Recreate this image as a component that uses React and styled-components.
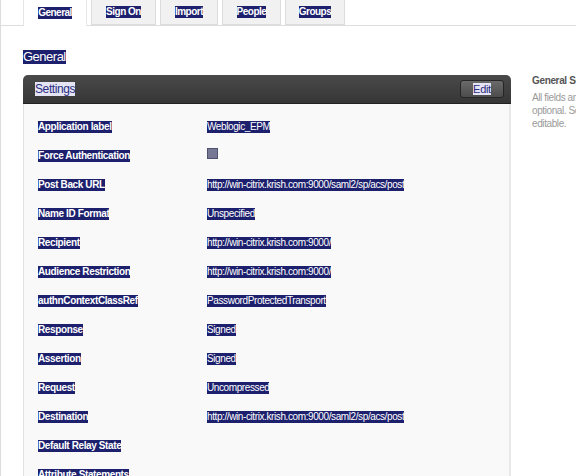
import React from "react";
import styled, { createGlobalStyle } from "styled-components";

const Global = createGlobalStyle`
  html, body { margin: 0; padding: 0; overflow: hidden; background: #fff; }
  body { font-family: "Liberation Sans", Arial, sans-serif; }
`;

const Page = styled.div`
  width: 576px;
  height: 476px;
  overflow: hidden;
  border-left: 1px solid #dcdcdc;
  box-sizing: border-box;
  background: #fff;
`;

const TabBar = styled.div`
  display: flex;
  align-items: flex-end;
  height: 26px;
  padding-left: 22px;
  border-bottom: 1px solid #dedede;
  box-sizing: border-box;
  gap: 4px;
`;

const Tab = styled.div`
  width: ${(p) => p.$w}px;
  height: ${(p) => (p.$active ? 26 : 25)}px;
  box-sizing: border-box;
  display: flex;
  align-items: center;
  justify-content: center;
  padding-bottom: 1px;
  background: ${(p) => (p.$active ? "#fff" : "#f1f1f1")};
  border: 1px solid ${(p) => (p.$active ? "#e6e6e6" : "#dcdcdc")};
  border-top: none;
  border-bottom: ${(p) => (p.$active ? "none" : "1px solid #dcdcdc")};
  margin-bottom: ${(p) => (p.$active ? -1 : 0)}px;
`;

const Sel = styled.span`
  display: inline-block;
  background: #1d206c;
  color: #fff;
  line-height: ${(p) => p.$lh || 12}px;
  font-size: ${(p) => p.$size || 10}px;
  font-weight: ${(p) => (p.$bold ? "bold" : "normal")};
  letter-spacing: ${(p) => p.$ls ?? -0.38}px;
`;

const InvSel = styled.span`
  display: inline-block;
  background: #e4e4f4;
  color: #2b2d80;
  line-height: ${(p) => p.$lh || 14}px;
  font-size: ${(p) => p.$size || 12}px;
  letter-spacing: ${(p) => p.$ls ?? -0.4}px;
`;

const Content = styled.div`
  display: flex;
  gap: 21px;
  padding-left: 22px;
`;

const Main = styled.div`
  width: 488px;
  flex-shrink: 0;
`;

const Heading = styled.h2`
  margin: 23px 0 11px;
  font-size: 13px;
  font-weight: normal;
  line-height: 15px;
  height: 15px;
`;

const Panel = styled.div`
  display: flex;
  flex-direction: column;
`;

const PanelHeader = styled.div`
  height: 29px;
  box-sizing: border-box;
  display: flex;
  align-items: center;
  justify-content: space-between;
  padding: 0 7px 0 12px;
  background: linear-gradient(#4a4a4a, #363636);
  border-radius: 5px 5px 0 0;
  border-bottom: 1px solid #222;
`;

const EditButton = styled.button`
  width: 44px;
  height: 18px;
  padding: 0;
  display: flex;
  align-items: center;
  justify-content: center;
  background: linear-gradient(#6a6a6a, #4c4c4c);
  border: 1px solid #262626;
  border-radius: 3px;
  font-family: "Liberation Sans", Arial, sans-serif;
`;

const PanelBody = styled.div`
  background: #f9f9f9;
  border-left: 1px solid #e2e2e2;
  border-right: 2px solid #e8e8e8;
  padding: 6px 0 0 14px;
  display: grid;
  grid-template-columns: 169px 1fr;
  grid-auto-rows: 29px;
  align-items: center;
`;

const Checkbox = styled.span`
  display: inline-block;
  width: 9px;
  height: 9px;
  background: #767896;
  border: 1px solid #4f5170;
  margin-top: -4px;
`;

const Side = styled.div`
  width: 220px;
  flex-shrink: 0;
  padding-top: 48px;
`;

const SideTitle = styled.div`
  font-size: 10px;
  font-weight: bold;
  color: #555;
  line-height: 13px;
  letter-spacing: -0.35px;
  margin-bottom: 4px;
  white-space: nowrap;
`;

const SideText = styled.div`
  font-size: 10px;
  color: #9a9a9a;
  line-height: 13px;
  letter-spacing: -0.4px;
  white-space: nowrap;
`;

const tabs = [
  ["General", 64, true],
  ["Sign On", 65],
  ["Import", 58],
  ["People", 59],
  ["Groups", 60],
];

const rows = [
  ["Application label", "Weblogic_EPM"],
  ["Force Authentication", null, true],
  ["Post Back URL", "http://win-citrix.krish.com:9000/saml2/sp/acs/post"],
  ["Name ID Format", "Unspecified"],
  ["Recipient", "http://win-citrix.krish.com:9000/"],
  ["Audience Restriction", "http://win-citrix.krish.com:9000/"],
  ["authnContextClassRef", "PasswordProtectedTransport"],
  ["Response", "Signed"],
  ["Assertion", "Signed"],
  ["Request", "Uncompressed"],
  ["Destination", "http://win-citrix.krish.com:9000/saml2/sp/acs/post"],
  ["Default Relay State", ""],
  ["Attribute Statements", ""],
];

export default function App() {
  return (
    <Page>
      <Global />
      <TabBar>
        {tabs.map(([t, w, a]) => (
          <Tab key={t} $w={w} $active={a}>
            <Sel $bold $ls={-0.5}>{t}</Sel>
          </Tab>
        ))}
      </TabBar>
      <Content>
        <Main>
          <Heading>
            <Sel $size={13} $lh={14} $ls={-0.5}>General</Sel>
          </Heading>
          <Panel>
            <PanelHeader>
              <InvSel $size={12} $lh={14}>Settings</InvSel>
              <EditButton>
                <InvSel $size={11} $lh={12} $ls={-0.3}>Edit</InvSel>
              </EditButton>
            </PanelHeader>
            <PanelBody>
              {rows.map(([label, value, check]) => (
                <React.Fragment key={label}>
                  <div>
                    <Sel $bold>{label}</Sel>
                  </div>
                  <div>
                    {check ? <Checkbox /> : value ? <Sel $ls={-0.4}>{value}</Sel> : null}
                  </div>
                </React.Fragment>
              ))}
            </PanelBody>
          </Panel>
        </Main>
        <Side>
          <SideTitle>General Settings</SideTitle>
          <SideText>All fields are required unless</SideText>
          <SideText>optional. Some fields are not</SideText>
          <SideText>editable.</SideText>
        </Side>
      </Content>
    </Page>
  );
}
